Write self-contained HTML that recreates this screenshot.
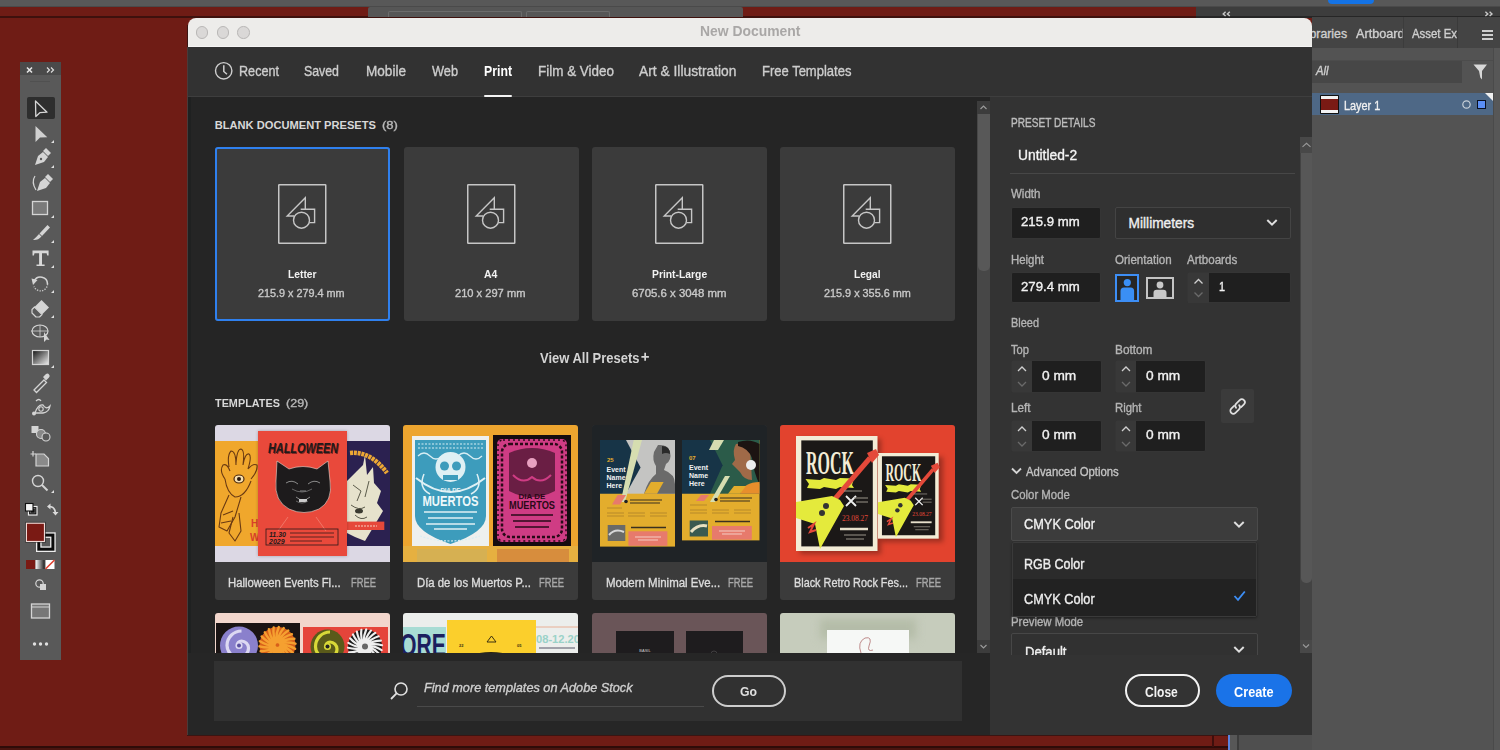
<!DOCTYPE html>
<html><head><meta charset="utf-8"><style>
html,body{margin:0;padding:0;width:1500px;height:750px;overflow:hidden;background:#6d1b15}
.b{position:absolute;box-sizing:border-box}
.t{position:absolute;white-space:nowrap;line-height:1;font-family:"Liberation Sans",sans-serif;transform-origin:0 0}
svg{position:absolute;overflow:visible}
</style></head><body>
<div class="b" style="left:0px;top:0px;width:1500px;height:750px;background:#6f1c15;"></div>
<div class="b" style="left:0px;top:0px;width:1500px;height:7px;background:#585858;"></div>
<div class="b" style="left:0px;top:16px;width:1196px;height:1.5px;background:#3e110d;"></div>
<div class="b" style="left:1196px;top:7px;width:304px;height:10.5px;background:#3d3d3d;"></div>
<div class="b" style="left:1196px;top:16px;width:304px;height:1.5px;background:#262626;"></div>
<div class="b" style="left:368px;top:7px;width:375px;height:10px;background:#565656;border-radius:2px 2px 0 0;"></div>
<div class="b" style="left:387.5px;top:11px;width:134.0px;height:6px;background:transparent;border:1px solid #6c6c6c;border-bottom:none;border-radius:2px 2px 0 0;"></div>
<div class="b" style="left:526px;top:11px;width:83.5px;height:6px;background:transparent;border:1px solid #6c6c6c;border-bottom:none;border-radius:2px 2px 0 0;"></div>
<div class="b" style="left:0px;top:6px;width:1500px;height:1px;background:#4a4a4a;"></div>
<div class="b" style="left:1312px;top:17px;width:188px;height:733px;background:#535353;"></div>
<div class="b" style="left:0px;top:746px;width:1228px;height:2px;background:#2e0c09;"></div>
<div class="b" style="left:0px;top:748px;width:1228px;height:2px;background:#4a140f;"></div>
<div class="b" style="left:20px;top:62px;width:41px;height:598px;background:#595959;"></div>
<div class="b" style="left:20px;top:62px;width:41px;height:13px;background:#4a4a4a;"></div>
<div class="b" style="left:27px;top:97px;width:28px;height:22px;background:#2e2e2e;border-radius:2px;"></div>
<div class="b" style="left:187px;top:25px;width:1126px;height:711px;background:#3a1512;"></div>
<div class="b" style="left:188px;top:30px;width:1124px;height:705px;background:#252525;"></div>
<div class="b" style="left:187px;top:47px;width:1px;height:688px;background:#4a3a38;"></div>
<div class="b" style="left:188px;top:97px;width:3px;height:638px;background:#1f2121;"></div>
<div class="b" style="left:188px;top:17.5px;width:1124px;height:29.5px;background:#edecea;border-radius:8px 8px 0 0;"></div>
<div class="b" style="left:195.75px;top:26.1px;width:12.5px;height:12.5px;border-radius:50%;background:#dad8d7;border:1.2px solid #b9b7b6"></div>
<div class="b" style="left:216.65px;top:26.1px;width:12.5px;height:12.5px;border-radius:50%;background:#dad8d7;border:1.2px solid #b9b7b6"></div>
<div class="b" style="left:237.45px;top:26.1px;width:12.5px;height:12.5px;border-radius:50%;background:#dad8d7;border:1.2px solid #b9b7b6"></div>
<div class="b" style="left:188px;top:45.5px;width:1124px;height:1.0px;background:#f6f5f5;"></div>
<div class="b" style="left:188px;top:46.5px;width:1124px;height:1.0px;background:#8a8a8a;"></div>
<span class="t" style="left:699.50px;top:24.26px;font-size:14.29px;color:#a9a7a6;font-weight:700;transform:scaleX(0.974);">New Document</span>
<div class="b" style="left:188px;top:47px;width:1124px;height:49px;background:#323232;"></div>
<div class="b" style="left:188px;top:96px;width:1124px;height:1px;background:#3e3e3e;"></div>
<div class="b" style="left:484.2px;top:95px;width:27.80000000000001px;height:2px;background:#f4f4f4;border-radius:1px;"></div>
<svg style="left:214px;top:61px;" width="20" height="20" viewBox="0 0 20 20"><circle cx="9.7" cy="9.8" r="8.2" fill="none" stroke="#cfcfcf" stroke-width="1.4"/><path d="M9.8 4.2 V10.5 L13 13.2" fill="none" stroke="#cfcfcf" stroke-width="1.5"/></svg>
<span class="t" style="left:239.00px;top:63.86px;font-size:14.29px;color:#cdcdcd;-webkit-text-stroke:0.35px currentColor;transform:scaleX(0.884);">Recent</span>
<span class="t" style="left:304.00px;top:63.86px;font-size:14.29px;color:#cdcdcd;-webkit-text-stroke:0.35px currentColor;transform:scaleX(0.864);">Saved</span>
<span class="t" style="left:366.00px;top:63.86px;font-size:14.29px;color:#cdcdcd;-webkit-text-stroke:0.35px currentColor;transform:scaleX(0.950);">Mobile</span>
<span class="t" style="left:432.00px;top:63.86px;font-size:14.29px;color:#cdcdcd;-webkit-text-stroke:0.35px currentColor;transform:scaleX(0.893);">Web</span>
<span class="t" style="left:537.50px;top:63.86px;font-size:14.29px;color:#cdcdcd;-webkit-text-stroke:0.35px currentColor;transform:scaleX(0.942);">Film &amp; Video</span>
<span class="t" style="left:639.00px;top:63.86px;font-size:14.29px;color:#cdcdcd;-webkit-text-stroke:0.35px currentColor;transform:scaleX(0.967);">Art &amp; Illustration</span>
<span class="t" style="left:762.00px;top:63.86px;font-size:14.29px;color:#cdcdcd;-webkit-text-stroke:0.35px currentColor;transform:scaleX(0.911);">Free Templates</span>
<span class="t" style="left:484.00px;top:63.86px;font-size:14.29px;color:#ffffff;font-weight:700;transform:scaleX(0.860);">Print</span>
<span class="t" style="left:214.70px;top:120.23px;font-size:11.14px;color:#d8d8d8;font-weight:700;">BLANK DOCUMENT PRESETS</span>
<span class="t" style="left:382.00px;top:120.23px;font-size:11.14px;color:#b8b8b8;-webkit-text-stroke:0.35px currentColor;transform:scaleX(1.175);">(8)</span>
<div class="b" style="left:215px;top:147px;width:175px;height:174px;background:#3b3b3b;border-radius:3px;"></div>
<svg style="left:278px;top:184px;" width="50" height="62" viewBox="0 0 50 62"><rect x="0.75" y="0.75" width="47" height="58.5" fill="none" stroke="#c6c6c6" stroke-width="1.5" rx="0.5"/><path d="M16.3 32 L9.2 32 L27.3 13.8 L27.3 25.2" fill="none" stroke="#c6c6c6" stroke-width="1.4" stroke-linejoin="miter"/><path d="M22.7 25.2 L36.6 25.2 L36.6 38.6 L31.3 38.6" fill="none" stroke="#c6c6c6" stroke-width="1.4"/><circle cx="23.5" cy="36.2" r="8" fill="none" stroke="#c6c6c6" stroke-width="1.4"/></svg>
<span class="t" style="left:287.80px;top:268.86px;font-size:11.57px;color:#f2f2f2;font-weight:700;transform:scaleX(0.890);">Letter</span>
<span class="t" style="left:258.40px;top:288.05px;font-size:11.00px;color:#c9c9c9;-webkit-text-stroke:0.35px currentColor;transform:scaleX(0.984);">215.9 x 279.4 mm</span>
<div class="b" style="left:403.5px;top:147px;width:175.0px;height:174px;background:#3b3b3b;border-radius:3px;"></div>
<svg style="left:466.5px;top:184px;" width="50" height="62" viewBox="0 0 50 62"><rect x="0.75" y="0.75" width="47" height="58.5" fill="none" stroke="#c6c6c6" stroke-width="1.5" rx="0.5"/><path d="M16.3 32 L9.2 32 L27.3 13.8 L27.3 25.2" fill="none" stroke="#c6c6c6" stroke-width="1.4" stroke-linejoin="miter"/><path d="M22.7 25.2 L36.6 25.2 L36.6 38.6 L31.3 38.6" fill="none" stroke="#c6c6c6" stroke-width="1.4"/><circle cx="23.5" cy="36.2" r="8" fill="none" stroke="#c6c6c6" stroke-width="1.4"/></svg>
<span class="t" style="left:483.80px;top:268.86px;font-size:11.57px;color:#f2f2f2;font-weight:700;transform:scaleX(0.906);">A4</span>
<span class="t" style="left:455.00px;top:288.05px;font-size:11.00px;color:#c9c9c9;-webkit-text-stroke:0.35px currentColor;transform:scaleX(1.010);">210 x 297 mm</span>
<div class="b" style="left:592px;top:147px;width:175px;height:174px;background:#3b3b3b;border-radius:3px;"></div>
<svg style="left:655px;top:184px;" width="50" height="62" viewBox="0 0 50 62"><rect x="0.75" y="0.75" width="47" height="58.5" fill="none" stroke="#c6c6c6" stroke-width="1.5" rx="0.5"/><path d="M16.3 32 L9.2 32 L27.3 13.8 L27.3 25.2" fill="none" stroke="#c6c6c6" stroke-width="1.4" stroke-linejoin="miter"/><path d="M22.7 25.2 L36.6 25.2 L36.6 38.6 L31.3 38.6" fill="none" stroke="#c6c6c6" stroke-width="1.4"/><circle cx="23.5" cy="36.2" r="8" fill="none" stroke="#c6c6c6" stroke-width="1.4"/></svg>
<span class="t" style="left:651.60px;top:268.86px;font-size:11.57px;color:#f2f2f2;font-weight:700;transform:scaleX(0.894);">Print-Large</span>
<span class="t" style="left:631.60px;top:288.05px;font-size:11.00px;color:#c9c9c9;-webkit-text-stroke:0.35px currentColor;transform:scaleX(1.036);">6705.6 x 3048 mm</span>
<div class="b" style="left:780px;top:147px;width:175px;height:174px;background:#3b3b3b;border-radius:3px;"></div>
<svg style="left:843px;top:184px;" width="50" height="62" viewBox="0 0 50 62"><rect x="0.75" y="0.75" width="47" height="58.5" fill="none" stroke="#c6c6c6" stroke-width="1.5" rx="0.5"/><path d="M16.3 32 L9.2 32 L27.3 13.8 L27.3 25.2" fill="none" stroke="#c6c6c6" stroke-width="1.4" stroke-linejoin="miter"/><path d="M22.7 25.2 L36.6 25.2 L36.6 38.6 L31.3 38.6" fill="none" stroke="#c6c6c6" stroke-width="1.4"/><circle cx="23.5" cy="36.2" r="8" fill="none" stroke="#c6c6c6" stroke-width="1.4"/></svg>
<span class="t" style="left:854.30px;top:268.86px;font-size:11.57px;color:#f2f2f2;font-weight:700;transform:scaleX(0.880);">Legal</span>
<span class="t" style="left:823.90px;top:288.05px;font-size:11.00px;color:#c9c9c9;-webkit-text-stroke:0.35px currentColor;transform:scaleX(0.986);">215.9 x 355.6 mm</span>
<div class="b" style="left:215px;top:147px;width:175px;height:174px;background:transparent;border:2px solid #2f80ee;border-radius:3px;"></div>
<span class="t" style="left:540.00px;top:351.36px;font-size:14.29px;color:#d4d4d4;font-weight:700;transform:scaleX(0.908);">View All Presets</span>
<svg style="left:640px;top:351px;" width="10" height="12" viewBox="0 0 10 12"><path d="M1.4 5.8 H8.9 M5.15 1.8 V9.8" stroke="#d4d4d4" stroke-width="1.7"/></svg>
<span class="t" style="left:215.00px;top:397.83px;font-size:11.14px;color:#d8d8d8;font-weight:700;transform:scaleX(0.975);">TEMPLATES</span>
<span class="t" style="left:286.00px;top:397.83px;font-size:11.14px;color:#b8b8b8;-webkit-text-stroke:0.35px currentColor;transform:scaleX(1.126);">(29)</span>
<div class="b" style="left:214.6px;top:425px;width:175.00000000000003px;height:175px;background:#3b3b3b;border-radius:3px;"></div>
<span class="t" style="left:228.00px;top:577.62px;font-size:11.86px;color:#dcdcdc;-webkit-text-stroke:0.35px currentColor;transform:scaleX(0.954);">Halloween Events Fl...</span>
<span class="t" style="left:350.60px;top:577.62px;font-size:11.86px;color:#a8a8a8;-webkit-text-stroke:0.35px currentColor;transform:scaleX(0.791);">FREE</span>
<div class="b" style="left:403px;top:425px;width:175px;height:175px;background:#3b3b3b;border-radius:3px;"></div>
<span class="t" style="left:416.70px;top:577.62px;font-size:11.86px;color:#dcdcdc;-webkit-text-stroke:0.35px currentColor;transform:scaleX(0.956);">D&iacute;a de los Muertos P...</span>
<span class="t" style="left:539.00px;top:577.62px;font-size:11.86px;color:#a8a8a8;-webkit-text-stroke:0.35px currentColor;transform:scaleX(0.791);">FREE</span>
<div class="b" style="left:592px;top:425px;width:175px;height:175px;background:#3b3b3b;border-radius:3px;"></div>
<span class="t" style="left:605.80px;top:577.62px;font-size:11.86px;color:#dcdcdc;-webkit-text-stroke:0.35px currentColor;transform:scaleX(0.968);">Modern Minimal Eve...</span>
<span class="t" style="left:727.50px;top:577.62px;font-size:11.86px;color:#a8a8a8;-webkit-text-stroke:0.35px currentColor;transform:scaleX(0.791);">FREE</span>
<div class="b" style="left:780px;top:425px;width:175px;height:175px;background:#3b3b3b;border-radius:3px;"></div>
<span class="t" style="left:794.00px;top:577.62px;font-size:11.86px;color:#dcdcdc;-webkit-text-stroke:0.35px currentColor;transform:scaleX(0.915);">Black Retro Rock Fes...</span>
<span class="t" style="left:916.00px;top:577.62px;font-size:11.86px;color:#a8a8a8;-webkit-text-stroke:0.35px currentColor;transform:scaleX(0.791);">FREE</span>
<div class="b" style="left:214.6px;top:425px;width:175.00000000000003px;height:137px;overflow:hidden;border-radius:3px 3px 0 0"><div class="b" style="left:0px;top:0px;width:175px;height:137px;background:#dcd8e4;"></div>
<div class="b" style="left:0px;top:16px;width:44px;height:105px;background:#f0a72c;"></div>
<div class="b" style="left:132px;top:16px;width:43px;height:105px;background:#2b2150;"></div>
<svg style="left:0px;top:16px" width="44" height="105" viewBox="0 0 44 105"><g fill="none" stroke="#6a3a12" stroke-width="1.1" stroke-linejoin="round"><path d="M10 38 Q4 30 8 24 Q12 22 15 30 M14 26 Q12 14 16 10 Q21 10 21 24 M21 22 Q22 8 26 8 Q30 9 28 24 M28 24 Q30 12 34 13 Q37 15 33 28 M33 28 Q38 22 42 24 Q43 30 36 38"/><path d="M10 38 Q12 52 20 56 Q30 56 36 40"/><path d="M14 54 L6 72 L4 86 L12 90 L20 76 L26 56 M8 74 L18 70 M6 82 L16 80"/><path d="M18 76 L14 92 L20 100 L26 90 L24 72"/></g><ellipse cx="24" cy="38" rx="5" ry="4" fill="#f7e0b0" stroke="#4a2a10" stroke-width="1.2"/><circle cx="24" cy="38" r="2" fill="#2a1a10"/><text x="36" y="86" font-family="Liberation Sans" font-weight="700" font-size="10" fill="#d8402a">H</text><text x="35" y="100" font-family="Liberation Sans" font-weight="700" font-size="10" fill="#d8402a">W</text></svg>
<svg style="left:132px;top:16px" width="43" height="105" viewBox="0 0 43 105"><path d="M0 40 L10 30 L16 24 L18 14 L20 34 L26 26 L27 42 L34 50 L30 62 L36 70 L30 80 L24 90 L18 100 L8 96 L0 92 Z" fill="#e6e2cc"/><path d="M6 44 L14 50 L10 60 M4 64 Q12 70 18 66 M8 74 Q14 80 20 76 M22 40 L18 56" fill="none" stroke="#5a5a4a" stroke-width="1"/><ellipse cx="12" cy="70" rx="4" ry="2.5" fill="#3a3a30"/><path d="M3 12 Q24 10 40 32" fill="none" stroke="#eda834" stroke-width="4.5" stroke-dasharray="3 0.8"/><rect x="0" y="80.6" width="37.3" height="8.4" fill="#e6483a"/><path d="M8 85 H30" stroke="#f5d0c0" stroke-width="1.2" stroke-dasharray="2 1"/></svg>
<div class="b" style="left:43.5px;top:6px;width:88.5px;height:125px;background:#e9493b;box-shadow:0 0 3px rgba(0,0,0,0.25);"></div>
<svg style="left:43.5px;top:6px" width="88.5" height="125" viewBox="0 0 88.5 125"><text x="11" y="22.5" font-family="Liberation Sans" font-weight="700" font-style="italic" font-size="15" textLength="70" lengthAdjust="spacingAndGlyphs" fill="#3a1010" opacity="0.6">HALLOWEEN</text><text x="10" y="21.5" font-family="Liberation Sans" font-weight="700" font-style="italic" font-size="15" textLength="70" lengthAdjust="spacingAndGlyphs" fill="#1e1a1a">HALLOWEEN</text><path d="M19 30 L31 38 Q45 33 59 38 L70 30 L72 50 Q75 70 61 78 Q46 85 31 78 Q16 70 18 50 Z" fill="#1d1b1c" stroke="#e8d8d0" stroke-width="0.6"/><path d="M28 52 Q34 48 40 53 M50 53 Q56 48 62 52 M38 66 Q45 72 52 66 M42 60 H48" fill="none" stroke="#8a8a8a" stroke-width="1"/><rect x="41" y="68" width="8" height="3" fill="#ccc"/><path d="M34 58 Q44 64 54 58 M38 70 Q44 74 50 70" fill="none" stroke="#777" stroke-width="0.8"/><path d="M30 86 L20 100 M58 86 L68 100" stroke="#f08a7a" stroke-width="0.7"/><rect x="8" y="98" width="72" height="16" fill="none" stroke="#2a1a1a" stroke-width="0.8"/><text x="11" y="106" font-family="Liberation Sans" font-weight="700" font-style="italic" font-size="7" fill="#1e1a1a">11.30</text><text x="11" y="113" font-family="Liberation Sans" font-weight="700" font-style="italic" font-size="7" fill="#1e1a1a">2029</text><path d="M32 102 H76 M32 106 H76 M32 110 H64" stroke="#5a2420" stroke-width="1"/></svg>
</div>
<div class="b" style="left:403px;top:425px;width:175px;height:137px;overflow:hidden;border-radius:3px 3px 0 0"><div class="b" style="left:0px;top:0px;width:175px;height:137px;background:#eda52f;"></div>
<div class="b" style="left:0px;top:121px;width:175px;height:16px;background:#e6b040;"></div>
<div class="b" style="left:9px;top:11px;width:77px;height:110px;background:#eef0ee;"></div>
<svg style="left:9px;top:11px" width="77" height="110" viewBox="0 0 77 110"><path d="M3 4 H74 V80 Q74 96 38.5 108 Q3 96 3 80 Z" fill="#3d9cbc"/><path d="M6 8 H71 M6 12 H71 M8 100 Q38 110 68 100" stroke="#d8eef4" stroke-width="1.2" stroke-dasharray="2 1.5" fill="none"/><path d="M6 20 Q12 14 18 20 Q24 26 30 20 M46 20 Q52 14 58 20 Q64 26 70 20" stroke="#d8eef4" stroke-width="1.2" fill="none"/><circle cx="38.5" cy="31" r="15" fill="#dff0f4"/><circle cx="32.5" cy="30" r="4.5" fill="#3d9cbc"/><circle cx="44.5" cy="30" r="4.5" fill="#3d9cbc"/><rect x="31" y="39" width="15" height="5" fill="#3d9cbc"/><path d="M4 42 Q38.5 70 73 42" fill="none" stroke="#dff0f4" stroke-width="2"/><path d="M12 38 Q6 52 18 58 M65 38 Q71 52 59 58" fill="none" stroke="#dff0f4" stroke-width="1.5"/><text x="38.5" y="56" text-anchor="middle" font-family="Liberation Sans" font-weight="700" font-size="6" fill="#e8f4f6">DIA DE</text><text x="38.5" y="70" text-anchor="middle" font-family="Liberation Sans" font-weight="700" font-size="15" textLength="56" lengthAdjust="spacingAndGlyphs" fill="#eef8fa">MUERTOS</text><path d="M12 76 H65 M16 82 H61 M14 88 H63 M22 93 H55" stroke="#dff0f4" stroke-width="1.6"/></svg>
<div class="b" style="left:90px;top:10px;width:78px;height:111px;background:#150c10;"></div>
<svg style="left:90px;top:10px" width="78" height="111" viewBox="0 0 78 111"><rect x="4" y="4" width="70" height="103" rx="5" fill="#cf3c84"/><rect x="9" y="9" width="60" height="93" rx="8" fill="none" stroke="#2a0a18" stroke-width="2.5" stroke-dasharray="3 2"/><rect x="5" y="5" width="68" height="101" rx="5" fill="none" stroke="#2a0a18" stroke-width="1.5" stroke-dasharray="2 3"/><path d="M16 18 Q39 8 62 18 L62 56 Q39 68 16 56 Z" fill="#6a1e44"/><circle cx="39" cy="28" r="5" fill="#e8a0c0"/><path d="M20 40 Q30 50 39 42 Q48 50 58 40" stroke="#cf3c84" stroke-width="2" fill="none"/><text x="39" y="64" text-anchor="middle" font-family="Liberation Sans" font-weight="700" font-size="8" fill="#2a0a18">DIA DE</text><text x="39" y="74" text-anchor="middle" font-family="Liberation Sans" font-weight="700" font-size="10" textLength="46" lengthAdjust="spacingAndGlyphs" fill="#2a0a18">MUERTOS</text><path d="M18 80 H60 M20 86 H58 M22 92 H56" stroke="#2a0a18" stroke-width="1.6"/></svg>
<div class="b" style="left:14px;top:124px;width:70px;height:13px;background:#c8b060;opacity:0.55;"></div>
<div class="b" style="left:94px;top:124px;width:72px;height:13px;background:#c86a3a;opacity:0.5;"></div>
</div>
<div class="b" style="left:592px;top:425px;width:175px;height:137px;overflow:hidden;border-radius:3px 3px 0 0"><div class="b" style="left:0px;top:0px;width:175px;height:137px;background:#1f2326;"></div>
<svg style="left:8.4px;top:15.4px" width="75" height="106.6" viewBox="0 0 75 106.6"><rect x="0" y="0" width="75" height="106.6" fill="#e3ad2d"/><rect x="26" y="0" width="49" height="53.7" fill="#c4c4c2"/><path d="M58 5 Q68 4 70 12 Q72 20 66 24 L64 30 Q75 34 75 44 L75 53.7 L44 53.7 Q48 40 56 34 L56 26 Q52 20 54 12 Z" fill="#6a6a6a"/><path d="M62 6 Q70 6 70 14 Q66 12 62 14 Z" fill="#2a2a2a"/><path d="M0 0 H26 L40.6 27.6 L26 53.7 H0 Z" fill="#173447"/><path d="M33.7 0 H42 L25 62 H20.7 Z" fill="#d6ddb0"/><path d="M51 42 H63.6 L57 53.7 H44 Z" fill="#e3ad2d"/><path d="M17.6 55 H26 L20 64.4 H12 Z" fill="#e77a6c"/><text x="7" y="22" font-family="Liberation Sans" font-weight="700" font-size="6" fill="#e3ad2d">25</text><text x="6.5" y="32" font-family="Liberation Sans" font-weight="700" font-size="7" fill="#f2f2f2">Event</text><text x="6.5" y="40" font-family="Liberation Sans" font-weight="700" font-size="7" fill="#f2f2f2">Name</text><text x="6.5" y="48" font-family="Liberation Sans" font-weight="700" font-size="7" fill="#f2f2f2">Here</text><path d="M30 60 H62 M30 63 H60" stroke="#3a3020" stroke-width="1.2"/><circle cx="26" cy="61.5" r="1.8" fill="#222"/><path d="M7 68 H22 M7 73 H24 M28 73 H45 M50 73 H67 M7 76 H24 M28 76 H45 M50 76 H67" stroke="#b88a2a" stroke-width="1.2"/><rect x="7.7" y="85" width="17.6" height="16" fill="#6a6a68"/><path d="M9 95 Q15 88 24 92" stroke="#d8d8d8" stroke-width="2" fill="none"/><path d="M31 87.5 H66" stroke="#3a3020" stroke-width="1.6"/><rect x="28.4" y="91.3" width="39" height="14.5" fill="#e77a6c"/><path d="M35 97 H61 M38 100 H58" stroke="#f6d8d0" stroke-width="0.9"/></svg>
<svg style="left:89.9px;top:15.4px" width="77.5" height="100.4" viewBox="0 0 77.5 100.4"><rect x="0" y="0" width="77.5" height="100.4" fill="#e3ad2d"/><rect x="28" y="0" width="49.5" height="53.7" fill="#2b5b49"/><path d="M54 4 Q62 2 68 8 L70 40 Q62 40 58 32 L50 24 L53 20 Q50 10 54 4 Z" fill="#a06a48"/><path d="M56 2 Q68 -2 77.5 4 V44 Q72 34 70 18 Q66 8 56 6 Z" fill="#1c1412"/><circle cx="69" cy="25" r="5" fill="#ececec"/><path d="M58 53.7 Q62 42 77.5 42 V53.7 Z" fill="#e78e2c"/><path d="M0 0 H28 L40.6 25.3 L28 53.7 H0 Z" fill="#173447"/><path d="M32 0 H42 L36 10 H27 Z" fill="#d6ddb0"/><path d="M43 36 H48 L33 62 H28 Z" fill="#d6ddb0"/><path d="M52 46 H64 L58 53.7 H46 Z" fill="#e3ad2d"/><path d="M19 55 H27 L22 61 H14 Z" fill="#e77a6c"/><text x="7" y="20" font-family="Liberation Sans" font-weight="700" font-size="6" fill="#e3ad2d">07</text><text x="7" y="30" font-family="Liberation Sans" font-weight="700" font-size="7" fill="#f2f2f2">Event</text><text x="7" y="38" font-family="Liberation Sans" font-weight="700" font-size="7" fill="#f2f2f2">Name</text><text x="7" y="46" font-family="Liberation Sans" font-weight="700" font-size="7" fill="#f2f2f2">Here</text><path d="M38 58 H70 M38 61 H68" stroke="#3a3020" stroke-width="1.2"/><circle cx="34" cy="59.5" r="1.8" fill="#222"/><path d="M8 65 H25 M8 70 H25 M30 70 H47 M52 70 H69 M8 73 H25 M30 73 H47 M52 73 H69" stroke="#b88a2a" stroke-width="1.2"/><rect x="7.7" y="80.5" width="18.3" height="16" fill="#3a5a50"/><path d="M9 92 Q16 84 25 86" stroke="#e8e0c0" stroke-width="3" fill="none"/><path d="M33 81.5 H68" stroke="#3a3020" stroke-width="1.6"/><rect x="30" y="86" width="39.8" height="13.7" fill="#e77a6c"/><path d="M37 91 H63 M40 94 H60" stroke="#f6d8d0" stroke-width="0.9"/></svg>
</div>
<div class="b" style="left:780px;top:425px;width:175px;height:137px;overflow:hidden;border-radius:3px 3px 0 0"><div class="b" style="left:0px;top:0px;width:175px;height:137px;background:#e2432e;"></div>
<div class="b" style="left:20px;top:14px;width:81px;height:115px;background:rgba(0,0,0,0.3);filter:blur(2.5px);"></div>
<div class="b" style="left:101px;top:32px;width:62px;height:85px;background:rgba(0,0,0,0.3);filter:blur(2.5px);"></div>
<svg style="left:98px;top:28px" width="61.7175" height="86.675" viewBox="0 0 61.7175 86.675"><g transform="scale(0.745)"><rect x="0" y="0" width="81.5" height="115" fill="#f3ecd6"/><rect x="5.3" y="4.4" width="71.5" height="106" fill="#1b1817"/><text x="10" y="38" font-family="Liberation Serif" font-weight="700" font-size="33" textLength="48" lengthAdjust="spacingAndGlyphs" fill="#f3ecd6">ROCK</text><path d="M9.5 43 L24 44 L28 42 L40 44 L44 42 L58 42.5 L56 49 L58 52 L44 51 L40 53 L28 51 L24 53 L11 52 L13 48 Z" fill="#e4ea3c"/><path d="M38 64 L74 22" stroke="#e4493a" stroke-width="5"/><path d="M71 17 L80 13 L83 19 L76 27 Z" fill="#e4493a"/><path d="M0 66 L36 60 L44 64 L48 70 L24 113 L19 88 L0 82 Z" fill="#e4ea3c"/><circle cx="30" cy="70" r="3" fill="#333"/><circle cx="26" cy="77" r="3" fill="#333"/><path d="M12 92 L18 88 L14 96 L20 94" stroke="#e4493a" stroke-width="2" fill="none"/><path d="M50 70 L60 60 M50 60 L60 70" stroke="#eee" stroke-width="1.8"/><text x="46" y="85" font-family="Liberation Serif" font-size="9" textLength="26" lengthAdjust="spacingAndGlyphs" fill="#e4493a">23.08.27</text><path d="M44 93 H72" stroke="#e8e0cc" stroke-width="2.5"/><path d="M48 55 H66 M58 62 H72 M60 66 H72 M48 99 H70 M50 103 H68" stroke="#9a948a" stroke-width="1"/></g></svg>
<svg style="left:16px;top:11px" width="82.5" height="116.0" viewBox="0 0 82.5 116.0"><g transform="scale(1.0)"><rect x="0" y="0" width="81.5" height="115" fill="#f3ecd6"/><rect x="5.3" y="4.4" width="71.5" height="106" fill="#1b1817"/><text x="10" y="38" font-family="Liberation Serif" font-weight="700" font-size="33" textLength="48" lengthAdjust="spacingAndGlyphs" fill="#f3ecd6">ROCK</text><path d="M9.5 43 L24 44 L28 42 L40 44 L44 42 L58 42.5 L56 49 L58 52 L44 51 L40 53 L28 51 L24 53 L11 52 L13 48 Z" fill="#e4ea3c"/><path d="M38 64 L74 22" stroke="#e4493a" stroke-width="5"/><path d="M71 17 L80 13 L83 19 L76 27 Z" fill="#e4493a"/><path d="M0 66 L36 60 L44 64 L48 70 L24 113 L19 88 L0 82 Z" fill="#e4ea3c"/><circle cx="30" cy="70" r="3" fill="#333"/><circle cx="26" cy="77" r="3" fill="#333"/><path d="M12 92 L18 88 L14 96 L20 94" stroke="#e4493a" stroke-width="2" fill="none"/><path d="M50 70 L60 60 M50 60 L60 70" stroke="#eee" stroke-width="1.8"/><text x="46" y="85" font-family="Liberation Serif" font-size="9" textLength="26" lengthAdjust="spacingAndGlyphs" fill="#e4493a">23.08.27</text><path d="M44 93 H72" stroke="#e8e0cc" stroke-width="2.5"/><path d="M48 55 H66 M58 62 H72 M60 66 H72 M48 99 H70 M50 103 H68" stroke="#9a948a" stroke-width="1"/></g></svg>
</div>
<div class="b" style="left:214.6px;top:613px;width:175.00000000000003px;height:40px;overflow:hidden;border-radius:3px 3px 0 0"><div class="b" style="left:0px;top:0px;width:175px;height:40px;background:#f2d6cc;"></div>
<div class="b" style="left:1.5px;top:10px;width:83.5px;height:30px;background:#1a1414;"></div>
<div class="b" style="left:88.5px;top:13.5px;width:85.0px;height:26.5px;background:#e5443a;"></div>
<svg style="left:0px;top:0px" width="175" height="40" viewBox="0 0 175 40"><circle cx="24" cy="32.5" r="19" fill="#8a80cc"/><path d="M24 32.5 m0 -2 a2 2 0 1 1 -2 2 a4.5 4.5 0 0 1 4.5 -4.5 a7 7 0 0 1 7 7 a9.5 9.5 0 0 1 -9.5 9.5 a12 12 0 0 1 -12 -12 a14.5 14.5 0 0 1 14.5 -14.5" fill="none" stroke="#dcd8f2" stroke-width="3.2"/><circle cx="24" cy="32.5" r="2" fill="#5a50a0"/><circle cx="62.5" cy="32" r="18" fill="#d8601a"/><path d="M65.5 32.0 Q73.0 34.7 78.3 40.6 M65.4 32.8 Q71.8 37.5 75.2 44.7 M65.0 33.6 Q69.9 39.9 71.1 47.8 M64.5 34.3 Q67.3 41.7 66.3 49.6 M63.7 34.7 Q64.4 42.6 61.2 50.0 M62.9 35.0 Q61.3 42.7 56.2 48.9 M62.1 35.0 Q58.4 42.0 51.7 46.4 M61.3 34.7 Q55.7 40.4 48.1 42.8 M60.5 34.3 Q53.6 38.2 45.6 38.3 M60.0 33.6 Q52.3 35.4 44.5 33.3 M59.6 32.8 Q51.7 32.4 44.9 28.2 M59.5 32.0 Q52.0 29.3 46.7 23.4 M59.6 31.2 Q53.2 26.5 49.8 19.3 M60.0 30.4 Q55.1 24.1 53.9 16.2 M60.5 29.7 Q57.7 22.3 58.7 14.4 M61.3 29.3 Q60.6 21.4 63.8 14.0 M62.1 29.0 Q63.7 21.3 68.8 15.1 M62.9 29.0 Q66.6 22.0 73.3 17.6 M63.7 29.3 Q69.3 23.6 76.9 21.2 M64.5 29.7 Q71.4 25.8 79.4 25.7 M65.0 30.4 Q72.7 28.6 80.5 30.7 M65.4 31.2 Q73.3 31.6 80.1 35.8 " fill="none" stroke="#f5a030" stroke-width="2.4" stroke-linecap="round"/><circle cx="112.5" cy="33.5" r="17" fill="#5a5a1a"/><path d="M112.5 33.5 m0 -2 a2 2 0 1 1 -2 2 a4.5 4.5 0 0 1 4.5 -4.5 a7 7 0 0 1 7 7 a9.5 9.5 0 0 1 -9.5 9.5 a12 12 0 0 1 -12 -12 a14.5 14.5 0 0 1 14.5 -14.5" fill="none" stroke="#d8d838" stroke-width="3.2"/><circle cx="112.5" cy="33.5" r="2" fill="#222"/><circle cx="150" cy="33.5" r="17" fill="#1a1a1a"/><path d="M153.0 33.5 Q159.9 36.0 164.9 41.7 M152.9 34.3 Q158.8 38.7 162.0 45.5 M152.5 35.1 Q156.9 41.0 158.1 48.4 M152.0 35.8 Q154.6 42.6 153.6 50.1 M151.2 36.2 Q151.8 43.5 148.8 50.5 M150.4 36.5 Q148.9 43.6 144.1 49.4 M149.6 36.5 Q146.1 42.9 139.8 47.1 M148.8 36.2 Q143.6 41.4 136.4 43.7 M148.0 35.8 Q141.6 39.3 134.1 39.4 M147.5 35.1 Q140.3 36.7 133.0 34.7 M147.1 34.3 Q139.8 33.9 133.4 29.9 M147.0 33.5 Q140.1 31.0 135.1 25.3 M147.1 32.7 Q141.2 28.3 138.0 21.5 M147.5 31.9 Q143.1 26.0 141.9 18.6 M148.0 31.2 Q145.4 24.4 146.4 16.9 M148.8 30.8 Q148.2 23.5 151.2 16.5 M149.6 30.5 Q151.1 23.4 155.9 17.6 M150.4 30.5 Q153.9 24.1 160.2 19.9 M151.2 30.8 Q156.4 25.6 163.6 23.3 M152.0 31.2 Q158.4 27.7 165.9 27.6 M152.5 31.9 Q159.7 30.3 167.0 32.3 M152.9 32.7 Q160.2 33.1 166.6 37.1 " fill="none" stroke="#eeeeee" stroke-width="2.2" stroke-linecap="round"/><circle cx="150" cy="33.5" r="3" fill="#666"/></svg>
</div>
<div class="b" style="left:403px;top:613px;width:175px;height:40px;overflow:hidden;border-radius:3px 3px 0 0"><div class="b" style="left:0px;top:0px;width:175px;height:40px;background:#eceeec;"></div>
<div class="b" style="left:0px;top:14px;width:43px;height:26px;background:#a8dcd4;"></div>
<svg style="left:0px;top:0px" width="175" height="40" viewBox="0 0 175 40"><text x="-3" y="43" font-family="Liberation Sans" font-weight="700" font-size="32" textLength="46" lengthAdjust="spacingAndGlyphs" fill="#1c1f5e">ORE</text><text x="133" y="30" font-family="Liberation Sans" font-weight="700" font-size="11" textLength="44" lengthAdjust="spacingAndGlyphs" fill="#9ad2c8">08-12.20</text><path d="M132 14 H175" stroke="#e8a080" stroke-width="0.8"/><path d="M136 35 H172" stroke="#556" stroke-width="1"/></svg>
<div class="b" style="left:43.5px;top:6.5px;width:89.0px;height:33.5px;background:#fbcf2c;"></div>
<svg style="left:43.5px;top:6.5px" width="89" height="34" viewBox="0 0 89 34"><path d="M40 22 L44.5 16 L49 22 Z" fill="none" stroke="#3a3010" stroke-width="1"/><text x="12" y="27" font-size="4" font-weight="700" fill="#3a3010" font-family="Liberation Sans">22</text><text x="70" y="27" font-size="4" font-weight="700" fill="#3a3010" font-family="Liberation Sans">05</text><path d="M20 39 Q44 30 68 39" fill="none" stroke="#2a2410" stroke-width="5"/></svg>
</div>
<div class="b" style="left:592px;top:613px;width:175px;height:40px;overflow:hidden;border-radius:3px 3px 0 0"><div class="b" style="left:0px;top:0px;width:175px;height:40px;background:#6a5558;"></div>
<div class="b" style="left:24px;top:18px;width:58px;height:22px;background:#1e1c1e;"></div>
<div class="b" style="left:94px;top:18px;width:57px;height:22px;background:#1e1c1e;"></div>
<svg style="left:0px;top:0px" width="175" height="40" viewBox="0 0 175 40"><text x="53" y="39" text-anchor="middle" font-family="Liberation Sans" font-size="4" fill="#ccc">BASIL</text><circle cx="122" cy="41" r="3" fill="none" stroke="#555" stroke-width="0.6"/></svg>
</div>
<div class="b" style="left:780px;top:613px;width:175px;height:40px;overflow:hidden;border-radius:3px 3px 0 0"><div class="b" style="left:0px;top:0px;width:175px;height:40px;background:#c6ccbc;"></div>
<div class="b" style="left:40px;top:6px;width:96px;height:20px;background:#b4bca8;filter:blur(4px);"></div>
<div class="b" style="left:47px;top:17px;width:82px;height:23px;background:#f6f8f6;"></div>
<svg style="left:47px;top:17px" width="82" height="23" viewBox="0 0 82 23"><path d="M34 23 Q30 12 38 8 Q46 6 42 16 Q40 22 46 20" fill="none" stroke="#b07070" stroke-width="0.8"/></svg>
</div>
<div class="b" style="left:977px;top:101px;width:13px;height:552px;background:#474747;"></div>
<div class="b" style="left:977px;top:101px;width:13px;height:13px;background:#3c3c3c;"></div>
<div class="b" style="left:977.5px;top:114px;width:12.0px;height:157px;background:#585858;border-radius:0 0 5px 5px;"></div>
<svg style="left:977px;top:101px;" width="13" height="13" viewBox="0 0 13 13"><path d="M3.5 8 L6.5 5 L9.5 8" fill="none" stroke="#9a9a9a" stroke-width="1.2"/></svg>
<div class="b" style="left:977px;top:640px;width:13px;height:13px;background:#3c3c3c;"></div>
<svg style="left:977px;top:640px;" width="13" height="13" viewBox="0 0 13 13"><path d="M3.5 5 L6.5 8 L9.5 5" fill="none" stroke="#9a9a9a" stroke-width="1.2"/></svg>
<div class="b" style="left:188px;top:653px;width:802px;height:82px;background:#262626;"></div>
<div class="b" style="left:214px;top:661px;width:748px;height:60px;background:#313131;"></div>
<svg style="left:388px;top:680px;" width="22" height="22" viewBox="0 0 22 22"><circle cx="13" cy="9" r="6" fill="none" stroke="#e0e0e0" stroke-width="1.6"/><path d="M8.8 13.2 L3 19" stroke="#e0e0e0" stroke-width="1.8"/></svg>
<span class="t" style="left:423.60px;top:681.77px;font-size:12.86px;color:#cfcfcf;-webkit-text-stroke:0.35px currentColor;font-style:italic;transform:scaleX(0.988);">Find more templates on Adobe Stock</span>
<div class="b" style="left:417px;top:706px;width:287px;height:1px;background:#4a4a4a;"></div>
<div class="b" style="left:711.5px;top:674.5px;width:74.5px;height:32.5px;background:transparent;border:2px solid #cdcdcd;border-radius:17px;"></div>
<span class="t" style="left:740.00px;top:686.07px;font-size:12.86px;color:#e0e0e0;font-weight:700;transform:scaleX(0.952);">Go</span>
<div class="b" style="left:990px;top:97px;width:322px;height:638px;background:#333333;"></div>
<span class="t" style="left:1010.60px;top:118.42px;font-size:11.86px;color:#bdbdbd;-webkit-text-stroke:0.35px currentColor;transform:scaleX(0.852);">PRESET DETAILS</span>
<span class="t" style="left:1017.60px;top:147.99px;font-size:14.71px;color:#f4f4f4;-webkit-text-stroke:0.35px currentColor;transform:scaleX(0.940);">Untitled-2</span>
<div class="b" style="left:1010px;top:173px;width:285px;height:1px;background:#474747;"></div>
<span class="t" style="left:1010.60px;top:188.82px;font-size:11.86px;color:#b5b5b5;-webkit-text-stroke:0.35px currentColor;transform:scaleX(0.970);">Width</span>
<div class="b" style="left:1011px;top:206.5px;width:90px;height:32.0px;background:#1f1f1f;border:1px solid #353535;border-radius:2px;"></div>
<span class="t" style="left:1020.80px;top:216.17px;font-size:12.86px;color:#f2f2f2;-webkit-text-stroke:0.35px currentColor;transform:scaleX(1.025);">215.9 mm</span>
<div class="b" style="left:1114.5px;top:206.5px;width:176.5px;height:32.0px;background:#2f2f2f;border:1px solid #444444;border-radius:2px;"></div>
<span class="t" style="left:1128.60px;top:217.04px;font-size:13.71px;color:#f0f0f0;-webkit-text-stroke:0.35px currentColor;">Millimeters</span>
<svg style="left:1264px;top:214px;" width="16" height="16" viewBox="0 0 16 16"><path d="M3.3 6 L8 10.6 L12.7 6" fill="none" stroke="#dedede" stroke-width="2"/></svg>
<span class="t" style="left:1010.60px;top:254.46px;font-size:12.29px;color:#b5b5b5;-webkit-text-stroke:0.35px currentColor;transform:scaleX(0.929);">Height</span>
<span class="t" style="left:1114.60px;top:254.46px;font-size:12.29px;color:#b5b5b5;-webkit-text-stroke:0.35px currentColor;transform:scaleX(0.942);">Orientation</span>
<span class="t" style="left:1187.20px;top:254.46px;font-size:12.29px;color:#b5b5b5;-webkit-text-stroke:0.35px currentColor;transform:scaleX(0.943);">Artboards</span>
<div class="b" style="left:1011px;top:271.8px;width:90px;height:31.399999999999977px;background:#1f1f1f;border:1px solid #353535;border-radius:2px;"></div>
<span class="t" style="left:1020.80px;top:280.77px;font-size:12.86px;color:#f2f2f2;-webkit-text-stroke:0.35px currentColor;transform:scaleX(1.025);">279.4 mm</span>
<div class="b" style="left:1114.6px;top:274.4px;width:24.600000000000136px;height:27.200000000000045px;background:#262626;border:2px solid #3d8ef5;"></div>
<svg style="left:1114.6px;top:274.4px;" width="25" height="27" viewBox="0 0 25 27"><circle cx="12.3" cy="8.6" r="3.6" fill="#3a8ff5"/><path d="M5.5 26 L5.5 17 Q5.5 13.5 9 13.5 L15.6 13.5 Q19.1 13.5 19.1 17 L19.1 26 Z" fill="#3a8ff5"/></svg>
<div class="b" style="left:1146.2px;top:276.6px;width:28.200000000000045px;height:22.799999999999955px;background:#2c2c2c;border:2px solid #c4c4c4;"></div>
<svg style="left:1146.2px;top:276.6px;" width="28" height="23" viewBox="0 0 28 23"><circle cx="14" cy="8" r="3.4" fill="#c8c8c8"/><path d="M7.5 21.5 L7.5 16 Q7.5 12.8 10.7 12.8 L17.3 12.8 Q20.5 12.8 20.5 16 L20.5 21.5 Z" fill="#c8c8c8"/></svg>
<div class="b" style="left:1187.2px;top:271.8px;width:104.0px;height:31.399999999999977px;background:#1f1f1f;border:1px solid #353535;border-radius:2px;"></div>
<div class="b" style="left:1188px;top:272.5px;width:21px;height:30.0px;background:#383838;"></div>
<svg style="left:1188px;top:272.5px;" width="21" height="30" viewBox="0 0 21 30"><path d="M6.5 10.5 L10.5 6.5 L14.5 10.5" fill="none" stroke="#d0d0d0" stroke-width="1.3"/><path d="M6.5 19.5 L10.5 23.5 L14.5 19.5" fill="none" stroke="#6a6a6a" stroke-width="1.3"/></svg>
<span class="t" style="left:1219.00px;top:280.77px;font-size:12.86px;color:#f2f2f2;-webkit-text-stroke:0.35px currentColor;transform:scaleX(0.839);">1</span>
<span class="t" style="left:1010.60px;top:317.46px;font-size:12.29px;color:#b5b5b5;-webkit-text-stroke:0.35px currentColor;transform:scaleX(0.891);">Bleed</span>
<span class="t" style="left:1010.60px;top:344.26px;font-size:12.29px;color:#b5b5b5;-webkit-text-stroke:0.35px currentColor;transform:scaleX(0.909);">Top</span>
<span class="t" style="left:1114.60px;top:344.26px;font-size:12.29px;color:#b5b5b5;-webkit-text-stroke:0.35px currentColor;transform:scaleX(0.963);">Bottom</span>
<div class="b" style="left:1011px;top:360.4px;width:90.79999999999995px;height:33.0px;background:#1f1f1f;border:1px solid #353535;border-radius:2px;"></div>
<div class="b" style="left:1012px;top:361.4px;width:20px;height:31.0px;background:#383838;"></div>
<svg style="left:1012px;top:361.4px;" width="20" height="31" viewBox="0 0 20 31"><path d="M6 10 L10 6 L14 10" fill="none" stroke="#d0d0d0" stroke-width="1.3"/><path d="M6 21 L10 25 L14 21" fill="none" stroke="#6a6a6a" stroke-width="1.3"/></svg>
<span class="t" style="left:1041.60px;top:370.37px;font-size:12.86px;color:#f2f2f2;-webkit-text-stroke:0.35px currentColor;transform:scaleX(1.064);">0 mm</span>
<div class="b" style="left:1114.6px;top:360.4px;width:91.20000000000005px;height:33.0px;background:#1f1f1f;border:1px solid #353535;border-radius:2px;"></div>
<div class="b" style="left:1115.6px;top:361.4px;width:20.0px;height:31.0px;background:#383838;"></div>
<svg style="left:1115.6px;top:361.4px;" width="20" height="31" viewBox="0 0 20 31"><path d="M6 10 L10 6 L14 10" fill="none" stroke="#d0d0d0" stroke-width="1.3"/><path d="M6 21 L10 25 L14 21" fill="none" stroke="#6a6a6a" stroke-width="1.3"/></svg>
<span class="t" style="left:1145.60px;top:370.37px;font-size:12.86px;color:#f2f2f2;-webkit-text-stroke:0.35px currentColor;transform:scaleX(1.064);">0 mm</span>
<span class="t" style="left:1010.60px;top:401.86px;font-size:12.29px;color:#b5b5b5;-webkit-text-stroke:0.35px currentColor;transform:scaleX(0.952);">Left</span>
<span class="t" style="left:1114.60px;top:401.86px;font-size:12.29px;color:#b5b5b5;-webkit-text-stroke:0.35px currentColor;transform:scaleX(0.924);">Right</span>
<div class="b" style="left:1011px;top:420.2px;width:90.79999999999995px;height:32.0px;background:#1f1f1f;border:1px solid #353535;border-radius:2px;"></div>
<div class="b" style="left:1012px;top:421.2px;width:20px;height:30.0px;background:#383838;"></div>
<svg style="left:1012px;top:421.2px;" width="20" height="30" viewBox="0 0 20 30"><path d="M6 10 L10 6 L14 10" fill="none" stroke="#d0d0d0" stroke-width="1.3"/><path d="M6 21 L10 25 L14 21" fill="none" stroke="#6a6a6a" stroke-width="1.3"/></svg>
<span class="t" style="left:1041.60px;top:429.17px;font-size:12.86px;color:#f2f2f2;-webkit-text-stroke:0.35px currentColor;transform:scaleX(1.064);">0 mm</span>
<div class="b" style="left:1114.6px;top:420.2px;width:91.20000000000005px;height:32.0px;background:#1f1f1f;border:1px solid #353535;border-radius:2px;"></div>
<div class="b" style="left:1115.6px;top:421.2px;width:20.0px;height:30.0px;background:#383838;"></div>
<svg style="left:1115.6px;top:421.2px;" width="20" height="30" viewBox="0 0 20 30"><path d="M6 10 L10 6 L14 10" fill="none" stroke="#d0d0d0" stroke-width="1.3"/><path d="M6 21 L10 25 L14 21" fill="none" stroke="#6a6a6a" stroke-width="1.3"/></svg>
<span class="t" style="left:1145.60px;top:429.17px;font-size:12.86px;color:#f2f2f2;-webkit-text-stroke:0.35px currentColor;transform:scaleX(1.064);">0 mm</span>
<div class="b" style="left:1220.8px;top:389.2px;width:33.600000000000136px;height:34.19999999999999px;background:#3b3b3b;border-radius:2px;"></div>
<svg style="left:1220.8px;top:389.2px;" width="34" height="34" viewBox="0 0 34 34"><g transform="rotate(-45 16.6 17.5)" fill="none" stroke="#e0e0e0" stroke-width="1.7" stroke-linecap="round"><path d="M14.6 14.5 H10.6 A3 3 0 0 0 10.6 20.5 H15.6 A3 3 0 0 0 18.6 17.6"/><path d="M18.6 20.5 H22.6 A3 3 0 0 0 22.6 14.5 H17.6 A3 3 0 0 0 14.6 17.4"/></g></svg>
<svg style="left:1010px;top:464px;" width="14" height="14" viewBox="0 0 14 14"><path d="M2 4.5 L6.5 9 L11 4.5" fill="none" stroke="#d4d4d4" stroke-width="1.9"/></svg>
<span class="t" style="left:1026.20px;top:466.37px;font-size:12.86px;color:#c4c4c4;-webkit-text-stroke:0.35px currentColor;transform:scaleX(0.883);">Advanced Options</span>
<span class="t" style="left:1010.60px;top:489.37px;font-size:12.86px;color:#b5b5b5;-webkit-text-stroke:0.35px currentColor;transform:scaleX(0.885);">Color Mode</span>
<div class="b" style="left:1011px;top:507px;width:246.5999999999999px;height:34.200000000000045px;background:#3c3c3c;border:1px solid #4a4a4a;border-radius:2px;"></div>
<span class="t" style="left:1024.00px;top:517.31px;font-size:14.57px;color:#f0f0f0;-webkit-text-stroke:0.35px currentColor;transform:scaleX(0.877);">CMYK Color</span>
<svg style="left:1231px;top:516px;" width="16" height="16" viewBox="0 0 16 16"><path d="M3.3 6 L8 10.6 L12.7 6" fill="none" stroke="#dedede" stroke-width="2"/></svg>
<span class="t" style="left:1010.80px;top:615.97px;font-size:12.86px;color:#b5b5b5;-webkit-text-stroke:0.35px currentColor;transform:scaleX(0.886);">Preview Mode</span>
<div class="b" style="left:1011px;top:633.3px;width:246.5999999999999px;height:36.700000000000045px;background:#313131;border:1px solid #474747;border-radius:2px;"></div>
<span class="t" style="left:1025.00px;top:644.81px;font-size:14.57px;color:#f0f0f0;-webkit-text-stroke:0.35px currentColor;transform:scaleX(0.899);">Default</span>
<svg style="left:1231px;top:641px;" width="16" height="16" viewBox="0 0 16 16"><path d="M3.3 6 L8 10.6 L12.7 6" fill="none" stroke="#dedede" stroke-width="2"/></svg>
<div class="b" style="left:990px;top:655px;width:322px;height:80px;background:#333333;"></div>
<div class="b" style="left:1011.7px;top:542.3px;width:245.5999999999999px;height:74.80000000000007px;background:#2b2b2b;border:1px solid #3a3a3a;border-radius:2px;box-shadow:0 1px 3px rgba(0,0,0,0.4);"></div>
<div class="b" style="left:1012.7px;top:579.3px;width:243.5999999999999px;height:36.80000000000007px;background:#222222;"></div>
<span class="t" style="left:1024.00px;top:557.31px;font-size:14.57px;color:#eeeeee;-webkit-text-stroke:0.35px currentColor;transform:scaleX(0.859);">RGB Color</span>
<span class="t" style="left:1024.00px;top:591.61px;font-size:14.57px;color:#eeeeee;-webkit-text-stroke:0.35px currentColor;transform:scaleX(0.873);">CMYK Color</span>
<svg style="left:1232px;top:589px;" width="16" height="14" viewBox="0 0 16 14"><path d="M2.5 7 L6 10.8 L12.8 2.5" fill="none" stroke="#3d8ef5" stroke-width="1.8"/></svg>
<div class="b" style="left:1300px;top:137px;width:12px;height:516px;background:#434343;"></div>
<div class="b" style="left:1300px;top:640px;width:12px;height:13px;background:#484848;"></div>
<div class="b" style="left:1300px;top:137px;width:12px;height:16px;background:#484848;"></div>
<div class="b" style="left:1300.5px;top:153px;width:11.0px;height:430px;background:#575757;border-radius:0 0 5px 5px;"></div>
<svg style="left:1301px;top:139px;" width="10" height="12" viewBox="0 0 10 12"><path d="M1.5 7.8 L5.5 4.3 L9.5 7.8" fill="none" stroke="#9a9a9a" stroke-width="1.1"/></svg>
<svg style="left:1301px;top:640px;" width="10" height="12" viewBox="0 0 10 12"><path d="M2 4.5 L5 7.5 L8 4.5" fill="none" stroke="#9a9a9a" stroke-width="1.1"/></svg>
<div class="b" style="left:1125.3px;top:674.3px;width:74.70000000000005px;height:33.200000000000045px;background:transparent;border:2px solid #f2f2f2;border-radius:17px;"></div>
<span class="t" style="left:1145.20px;top:684.86px;font-size:14.29px;color:#f2f2f2;font-weight:700;transform:scaleX(0.843);">Close</span>
<div class="b" style="left:1216px;top:674px;width:76px;height:33.299999999999955px;background:#1a73e8;border-radius:17px;"></div>
<span class="t" style="left:1233.80px;top:684.86px;font-size:14.29px;color:#ffffff;font-weight:700;transform:scaleX(0.890);">Create</span>
<div class="b" style="left:1328px;top:0px;width:46px;height:4px;background:#1473e6;border-radius:0 0 6px 6px;"></div>
<svg style="left:1220px;top:9px;" width="12" height="10" viewBox="0 0 12 10"><path d="M5.6 2.7 L3.2 4.9 L5.6 7.1 M9.8 2.7 L7.4 4.9 L9.8 7.1" fill="none" stroke="#c8c8c8" stroke-width="1.4"/></svg>
<svg style="left:1483px;top:9px;" width="12" height="10" viewBox="0 0 12 10"><path d="M2.4 2.7 L4.8 4.9 L2.4 7.1 M6.6 2.7 L9 4.9 L6.6 7.1" fill="none" stroke="#c8c8c8" stroke-width="1.4"/></svg>
<div class="b" style="left:1312px;top:17px;width:188px;height:31px;background:#444444;"></div>
<div class="b" style="left:1403px;top:17px;width:1px;height:31px;background:#3c3c3c;"></div>
<div class="b" style="left:1457px;top:17px;width:1px;height:31px;background:#3a3a3a;"></div>
<div class="b" style="left:0;top:0;width:1500px;height:750px;clip-path:polygon(1312px 17px,1500px 17px,1500px 48px,1312px 48px)"><span class="t" style="left:1309.50px;top:27.56px;font-size:12.29px;color:#cfcfcf;-webkit-text-stroke:0.35px currentColor;">braries</span>
</div><div class="b" style="left:0;top:0;width:1500px;height:750px;clip-path:polygon(1350px 17px,1402.5px 17px,1402.5px 48px,1350px 48px)"><span class="t" style="left:1356.40px;top:27.56px;font-size:12.29px;color:#cfcfcf;-webkit-text-stroke:0.35px currentColor;transform:scaleX(1.029);">Artboard</span>
</div><span class="t" style="left:1411.70px;top:27.56px;font-size:12.29px;color:#cfcfcf;-webkit-text-stroke:0.35px currentColor;transform:scaleX(0.928);">Asset Ex</span>
<div class="b" style="left:1481.6px;top:30.3px;width:11.400000000000091px;height:1.5px;background:#cfcfcf;"></div>
<div class="b" style="left:1481.6px;top:34.2px;width:11.400000000000091px;height:1.5px;background:#cfcfcf;"></div>
<div class="b" style="left:1481.6px;top:38px;width:11.400000000000091px;height:1.5px;background:#cfcfcf;"></div>
<div class="b" style="left:1312px;top:48px;width:188px;height:702px;background:#535353;"></div>
<div class="b" style="left:1312px;top:59.5px;width:188px;height:1.0px;background:#4c4c4c;"></div>
<div class="b" style="left:1312px;top:61px;width:150px;height:22px;background:#474747;"></div>
<span class="t" style="left:1315.87px;top:64.96px;font-size:12.29px;color:#d0d0d0;-webkit-text-stroke:0.35px currentColor;font-style:italic;transform:scaleX(0.921);">All</span>
<svg style="left:1472px;top:63px;" width="17" height="18" viewBox="0 0 17 18"><path d="M1.5 1.5 H15 L10 8 V16.5 L8.3 14.5 L7 8 Z" fill="#d8d8d8"/></svg>
<div class="b" style="left:1312px;top:93.3px;width:181px;height:22.0px;background:#4e6886;"></div>
<div class="b" style="left:1319.5px;top:95px;width:19.5px;height:19px;background:#111;border-radius:1px;"></div>
<div class="b" style="left:1320.5px;top:96px;width:17.5px;height:17px;background:#f2f2f2;"></div>
<div class="b" style="left:1320.5px;top:99px;width:17.5px;height:11px;background:#7a1a14;"></div>
<span class="t" style="left:1343.80px;top:98.73px;font-size:13.14px;color:#f0f0f0;-webkit-text-stroke:0.35px currentColor;transform:scaleX(0.826);">Layer 1</span>
<svg style="left:1460px;top:99px;" width="12" height="12" viewBox="0 0 12 12"><circle cx="6.5" cy="5.5" r="3.7" fill="none" stroke="#c8d0d8" stroke-width="1.2"/></svg>
<div class="b" style="left:1476.5px;top:99.5px;width:9.5px;height:9.0px;background:#5a8ef5;border:1.5px solid #0a1020;"></div>
<svg style="left:1485px;top:93px;" width="8" height="8" viewBox="0 0 8 8"><path d="M0 0 H8 V8 Z" fill="#f0f0f0"/></svg>
<div class="b" style="left:1493px;top:48px;width:1px;height:702px;background:#4a4a4a;"></div>
<div class="b" style="left:1494px;top:48px;width:6px;height:702px;background:#575757;"></div>
<div class="b" style="left:1228px;top:735px;width:2px;height:15px;background:#5a84e0;"></div>
<div class="b" style="left:1230px;top:735px;width:7px;height:15px;background:#575757;"></div>
<div class="b" style="left:1237px;top:735px;width:2px;height:15px;background:#3c3c3c;"></div>
<div class="b" style="left:1239px;top:735px;width:73px;height:15px;background:#4f4f4f;"></div>
<div class="b" style="left:1212px;top:735px;width:2px;height:12px;background:#3e0f0c;"></div>
<svg style="left:20.5px;top:64px;" width="34" height="13" viewBox="0 0 34 13"><path d="M6 3.5 L11 8.5 M11 3.5 L6 8.5" stroke="#e6e6e6" stroke-width="1.6"/><path d="M26 3.5 L28.5 6 L26 8.5 M30 3.5 L32.5 6 L30 8.5" fill="none" stroke="#dcdcdc" stroke-width="1.2"/></svg>
<div class="b" style="left:30px;top:80.5px;width:20px;height:1.5px;background:#505050;"></div>
<svg style="left:0px;top:0px;" width="70" height="700" viewBox="0 0 70 700"><path d="M35.5 101 L35.8 116.5 L39.8 112.7 L47 112.2 Z" fill="none" stroke="#d6d6d6" stroke-width="1.3" stroke-linejoin="round"/><path d="M35.5 126 L35.5 142 L40 137.5 L47.3 137.3 Z" fill="#d0d0d0"/><path d="M51 143 L54 140 L54 143 Z" fill="#e0e0e0"/><path d="M35 165 L38 156 L43 152 L48 157 L44 162 Z" fill="#d4d4d4"/><path d="M43 151 L46 148 L51 153 L48 156 Z" fill="#d4d4d4"/><circle cx="41" cy="159" r="1.2" fill="#595959"/><path d="M51 168 L54 165 L54 168 Z" fill="#e0e0e0"/><path d="M37 191 L40 182 L45 178 L50 183 L46 188 Z" fill="#d4d4d4"/><path d="M45 177 L48 174 L53 179 L50 182 Z" fill="#d4d4d4"/><path d="M35 176 Q31 182 36 190" fill="none" stroke="#d4d4d4" stroke-width="1.2"/><rect x="32.5" y="201.5" width="15" height="13" fill="#7a7a7a" stroke="#d4d4d4" stroke-width="1.3"/><path d="M51 218 L54 215 L54 218 Z" fill="#e0e0e0"/><path d="M47.5 225 L50 227.5 L42 236 L39.5 233.5 Z" fill="#d4d4d4"/><path d="M39 234 L41.5 236.5 Q38 240.5 33 240 Q36 237.5 39 234 Z" fill="#d4d4d4"/><path d="M51 243 L54 240 L54 243 Z" fill="#e0e0e0"/><path d="M32.5 250.5 H48.6 V255.5 L47.2 255.5 L46.6 253.2 H42 V264.4 H44.6 V266 H36.5 V264.4 H39.1 V253.2 H34.5 L33.9 255.5 H32.5 Z" fill="#d8d8d8"/><path d="M51 268 L54 265 L54 268 Z" fill="#e0e0e0"/><path d="M34.2 281 A7 7 0 0 1 47.5 284" fill="none" stroke="#d4d4d4" stroke-width="1.6"/><path d="M47.5 284 A7 7 0 0 1 34 286.5" fill="none" stroke="#c8c8c8" stroke-width="1.4" stroke-dasharray="1.3 1.3"/><path d="M31.5 278.5 L37.5 280 L33 285 Z" fill="#d4d4d4"/><path d="M51 293 L54 290 L54 293 Z" fill="#e0e0e0"/><path d="M41.5 300 L49 307.5 L42 314.5 L34.5 307 Z" fill="#d4d4d4"/><path d="M34.5 307 L42 314.5 L39.5 317 L36 317 L32 313 L32 309.5 Z" fill="#595959" stroke="#d4d4d4" stroke-width="1.2" stroke-linejoin="round"/><path d="M51 318 L54 315 L54 318 Z" fill="#e0e0e0"/><ellipse cx="40" cy="331" rx="8" ry="6" fill="none" stroke="#d4d4d4" stroke-width="1.2"/><path d="M31 331 H48 M40 325 V337" stroke="#d4d4d4" stroke-width="0.8"/><path d="M44 332 L44 342 L46.5 339.5 L49.5 340 Z" fill="#d4d4d4"/><defs><linearGradient id="gg" x1="0" x2="1" y1="0" y2="1"><stop offset="0" stop-color="#111"/><stop offset="1" stop-color="#eee"/></linearGradient></defs><rect x="32.5" y="350.5" width="16" height="14" fill="url(#gg)" stroke="#d4d4d4" stroke-width="1.2"/><path d="M51 368 L54 365 L54 368 Z" fill="#e0e0e0"/><path d="M34 390 L44 380 L46.5 382.5 L36.5 392.5 Z" fill="none" stroke="#d4d4d4" stroke-width="1.3"/><path d="M43 377 L46 374 Q48 373 49 374.5 Q50.5 376 49 377.5 L46 380.5 Z" fill="#d4d4d4"/><path d="M35 413 Q38 404 43 405 Q46 410 50 406 Q49 412 43 413 Q38 413 35 413" fill="none" stroke="#d4d4d4" stroke-width="1.3"/><circle cx="34" cy="413.5" r="2" fill="#d4d4d4"/><circle cx="41" cy="409" r="2.2" fill="none" stroke="#d4d4d4" stroke-width="1.1"/><path d="M36 401 Q39 398 41 401" fill="none" stroke="#d4d4d4" stroke-width="1.3"/><rect x="31.5" y="426" width="7" height="7" fill="#d4d4d4"/><circle cx="41" cy="434" r="4.5" fill="#888" stroke="#d4d4d4" stroke-width="1.1"/><circle cx="46" cy="437" r="4" fill="#595959" stroke="#d4d4d4" stroke-width="1.1"/><path d="M30.5 454 H36 M33 451 V456.5" stroke="#d4d4d4" stroke-width="1.2"/><path d="M36 454 H44 L48.5 458.5 V466 H36 Z" fill="#8a8a8a" stroke="#d4d4d4" stroke-width="1.2"/><circle cx="38" cy="481" r="5.5" fill="none" stroke="#d4d4d4" stroke-width="1.4"/><path d="M42 485 L47.5 490.5" stroke="#d4d4d4" stroke-width="2"/><path d="M51 493 L54 490 L54 493 Z" fill="#e0e0e0"/><rect x="28.5" y="506.5" width="8.5" height="8.5" fill="#111" stroke="#eee" stroke-width="1.2"/><rect x="30.5" y="508.5" width="4.5" height="4.5" fill="none" stroke="#888" stroke-width="0.6"/><rect x="25.5" y="503.5" width="7.5" height="7.5" fill="#f4f4f4" stroke="#111" stroke-width="1.1"/><path d="M49 506.5 Q55 506.5 55.5 513" fill="none" stroke="#dadada" stroke-width="1.6"/><path d="M47 506.5 L50.5 503.5 L50.5 509.5 Z M55.5 515.5 L52.5 512 L58.5 512 Z" fill="#dadada"/><rect x="36" y="532.3" width="19.7" height="19.7" fill="#ededed"/><rect x="37.3" y="533.6" width="17.1" height="17.1" fill="#0c0c0c"/><rect x="40.3" y="536.6" width="11.1" height="11.1" fill="#ededed"/><rect x="41.6" y="537.9" width="8.5" height="8.5" fill="#5a5a5a"/><rect x="25" y="521.8" width="21" height="21" fill="#2a2a2a" opacity="0.6"/><rect x="25.9" y="522.7" width="19.1" height="19.3" fill="#f0d8d4"/><rect x="27" y="523.8" width="16.9" height="17.1" fill="#7a1a14"/><rect x="26" y="560" width="9.5" height="9" fill="#7a1a14"/><defs><linearGradient id="g2"><stop offset="0" stop-color="#fff"/><stop offset="1" stop-color="#222"/></linearGradient></defs><rect x="35.5" y="560" width="9" height="9" fill="url(#g2)"/><rect x="45.5" y="560" width="9" height="9" fill="#fff"/><path d="M45.5 569 L54.5 560" stroke="#e04030" stroke-width="1.6"/><circle cx="39.5" cy="583.5" r="3.7" fill="none" stroke="#d4d4d4" stroke-width="1.2"/><rect x="40" y="584" width="6" height="6" fill="#d4d4d4"/><rect x="31.5" y="604" width="18" height="14" fill="#777" stroke="#d4d4d4" stroke-width="1.3"/><path d="M31.5 607 H49.5" stroke="#d4d4d4" stroke-width="1"/><circle cx="34.5" cy="644" r="1.7" fill="#e0e0e0"/><circle cx="40.5" cy="644" r="1.7" fill="#e0e0e0"/><circle cx="46.5" cy="644" r="1.7" fill="#e0e0e0"/></svg>
</body></html>
